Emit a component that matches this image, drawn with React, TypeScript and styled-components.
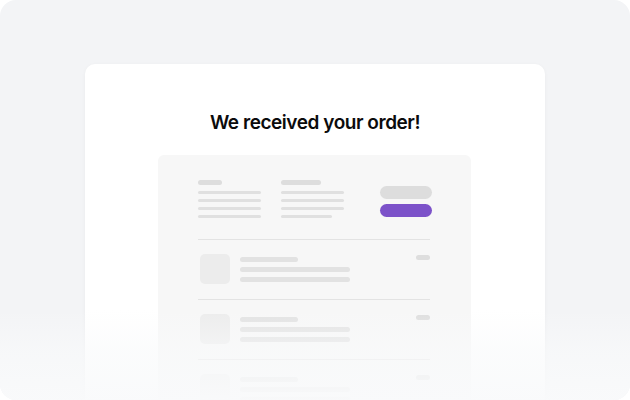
import styled, { createGlobalStyle } from 'styled-components';

const GlobalStyle = createGlobalStyle`
  html, body {
    margin: 0;
    padding: 0;
    background: #ffffff;
  }
  body {
    font-family: Inter, "Liberation Sans", sans-serif;
  }
`;

const Frame = styled.div`
  position: relative;
  width: 630px;
  height: 400px;
  border-radius: 16px;
  background: #f3f4f6;
  overflow: hidden;
  display: flex;
  justify-content: center;
  padding-top: 64px;
  box-sizing: border-box;
`;

const Card = styled.div`
  width: 460px;
  height: 360px;
  flex-shrink: 0;
  background: #ffffff;
  border-radius: 10px 10px 0 0;
  box-shadow: 0 1px 4px rgba(17, 24, 39, 0.04);
  padding-top: 47px;
  box-sizing: border-box;
`;

const Title = styled.h1`
  margin: 0 0 20px;
  font-size: 19px;
  line-height: 24px;
  font-weight: 600;
  letter-spacing: -0.45px;
  color: #0b0b0c;
  text-align: center;
`;

const Panel = styled.div`
  width: 313px;
  height: 250px;
  margin-left: 73px;
  background: #f7f7f7;
  border-radius: 6px 6px 0 0;
  padding: 25px 41px 0 40px;
  box-sizing: border-box;
`;

const Header = styled.div`
  display: flex;
  align-items: flex-start;
  gap: 20px;
`;

const Col = styled.div`
  display: flex;
  flex-direction: column;
  gap: 5px;
  width: 63px;
`;

const Bar = styled.div<{ $w: number; $h?: number; $c?: string }>`
  width: ${({ $w }) => $w}px;
  height: ${({ $h }) => $h ?? 3}px;
  border-radius: 3px;
  background: ${({ $c }) => $c ?? '#e0e0e0'};
  flex-shrink: 0;
`;

const Heading = styled(Bar)`
  margin-bottom: 1px;
`;

const Actions = styled.div`
  margin-left: auto;
  margin-right: -2px;
  margin-top: 6px;
  display: flex;
  flex-direction: column;
  gap: 5px;
`;

const Pill = styled.div<{ $primary?: boolean }>`
  width: 52px;
  height: 13px;
  border-radius: 7px;
  background: ${({ $primary }) => ($primary ? '#7c52c9' : '#dddddd')};
`;

const Divider = styled.div<{ $top?: number }>`
  height: 1px;
  background: #e3e3e3;
  margin-top: ${({ $top }) => $top ?? 0}px;
`;

const Row = styled.div`
  display: flex;
  align-items: flex-start;
  padding: 14px 0 15px 2px;
`;

const Thumb = styled.div`
  width: 30px;
  height: 30px;
  border-radius: 5px;
  background: #ececec;
  flex-shrink: 0;
`;

const Lines = styled.div`
  display: flex;
  flex-direction: column;
  gap: 5px;
  margin: 3px 0 0 10px;
`;

const Price = styled.div`
  margin: 1px 0 0 auto;
  width: 14px;
  height: 5px;
  border-radius: 3px;
  background: #dedede;
`;

const Fade = styled.div`
  position: absolute;
  left: 0;
  right: 0;
  bottom: 0;
  height: 90px;
  background: linear-gradient(
    to bottom,
    rgba(249, 250, 251, 0) 0%,
    rgba(249, 250, 251, 0.6) 45%,
    rgba(249, 250, 251, 0.95) 100%
  );
  pointer-events: none;
`;

const items = [1, 2, 3];

export default function App() {
  return (
    <>
      <GlobalStyle />
      <Frame>
        <Card>
          <Title>We received your order!</Title>
          <Panel>
            <Header>
              <Col>
                <Heading $w={24} $h={5} $c="#dddddd" />
                <Bar $w={63} />
                <Bar $w={63} />
                <Bar $w={63} />
                <Bar $w={63} />
              </Col>
              <Col>
                <Heading $w={40} $h={5} $c="#dddddd" />
                <Bar $w={63} />
                <Bar $w={63} />
                <Bar $w={63} />
                <Bar $w={51} />
              </Col>
              <Actions>
                <Pill />
                <Pill $primary />
              </Actions>
            </Header>
            <Divider $top={21} />
            {items.map((i) => (
              <div key={i}>
                <Row>
                  <Thumb />
                  <Lines>
                    <Bar $w={58} $h={5} $c="#e2e2e2" />
                    <Bar $w={110} $h={5} $c="#e2e2e2" />
                    <Bar $w={110} $h={5} $c="#e2e2e2" />
                  </Lines>
                  <Price />
                </Row>
                <Divider />
              </div>
            ))}
          </Panel>
        </Card>
        <Fade />
      </Frame>
    </>
  );
}
